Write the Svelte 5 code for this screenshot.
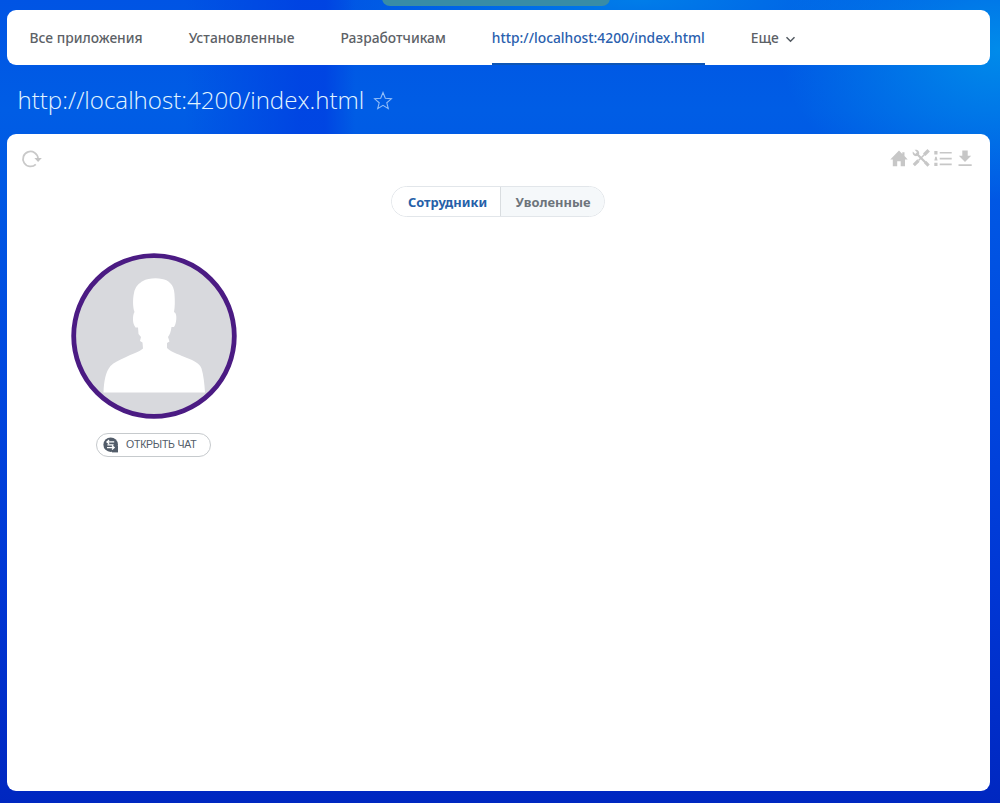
<script>
  const address = 'http://localhost:4200/index.html';
  const links = [
    { label: 'Все приложения' },
    { label: 'Установленные' },
    { label: 'Разработчикам' },
    { label: address, active: true }
  ];
</script>

<div class="page">
  <div class="notice"></div>
  <nav>
    {#each links as link}
      <span class="link" class:active={link.active}>{link.label}</span>
    {/each}
    <span class="link more">Еще
      <svg width="11" height="7" viewBox="0 0 11 7"><path d="M1.5 1.2 5.5 5.2 9.5 1.2" fill="none" stroke="#525960" stroke-width="1.5" /></svg>
    </span>
  </nav>

  <header>
    <h1>{address}</h1>
    <svg class="star" width="20" height="20" viewBox="0 0 20 20"><path d="M10 1.5 12.3 7.3 18.4 7.8 13.8 11.8 15.3 17.6 10 14.4 4.7 17.6 6.2 11.8 1.6 7.8 7.7 7.3Z" fill="none" stroke="#91bdf8" stroke-width="1.1" /></svg>
  </header>

  <main>
    <div class="toolbar">
      <svg width="22" height="20" viewBox="0 0 22 20"><path d="M14.8 15.3A7.5 7.5 0 1 1 17 9.2" fill="none" stroke="#c9c9c9" stroke-width="1.8" /><path d="M13.4 9H20.8L17.1 13Z" fill="#c4c4c4" /></svg>
      <div class="tools">
        <svg width="18" height="18" viewBox="0 0 18 18" fill="#c7c7c7"><path d="M9 1.5 0.3 10.4H2.8V17.2H7.2V12.2H10.7V17.2H15V10.4H17.7L14.5 7V3.2H12.3V4.9Z" /></svg>
        <svg width="18" height="18" viewBox="0 0 18 18"><g fill="none" stroke="#c7c7c7"><path d="m4.5 4.5 10 10" stroke-width="2.3" /><path d="m13.2 13.2 3.4 3.4M1.8 16.2l4.7-4.7" stroke-width="3.2" /><path d="m6.5 11.5 7-7" stroke-width="1.6" /><path d="m12.2 5.8 4.5-4.5" stroke-width="3.4" /></g><path d="M.8 2.6 3.2 5 5 3.2 2.6.8C5.5 0 7.8 2.3 7.1 5L5 7.1C2.3 7.8 0 5.5.8 2.6Z" fill="#c7c7c7" /></svg>
        <svg width="18" height="18" viewBox="0 0 18 18" fill="#c7c7c7"><path d="M5.7 3h12v1.6h-12zM5.7 8.8h12v1.6h-12zM5.7 14.6h12v1.6h-12zM.3 2h3.2v3.4H.3zM1.3 7.7h1.3l1 3.7H.3zM.3 13.7h3.2v3.4H.3z" /></svg>
        <svg width="18" height="18" viewBox="0 0 18 18" fill="#c7c7c7"><path d="M6.3 1.5h5.4v5.3h3.5L9 12.9 2.8 6.8h3.5zM2.5 15.2h13.2v1.7H2.5z" /></svg>
      </div>
    </div>

    <div class="tabs">
      <button class="selected">Сотрудники</button>
      <button>Уволенные</button>
    </div>

    <section class="employee">
      <svg width="166" height="166" viewBox="0 0 166 166">
        <circle cx="83" cy="83" r="80.5" fill="#d8d9dd" />
        <path d="M32.5 139.5 C33 128 34.5 119 39.5 113 C43 109 48 107.5 54 104.5 C61 101 68 99 72 95.5 L71.5 89.5 L69 88 L70 84 L67.5 81 L67 74.5 H64.5 C63 72 62 70 62 67 C62 63 62.3 61 63.5 59 C61.7 54 61.7 46 63 40 C64 34 68 30 72 28 C76 25.5 85 24.5 91 26 C97 27 103 31 103.5 41 C104 48 104 54 103 59 C105.2 60 105.5 63 105.3 66 C105 70 104 72.5 103 74 H100.5 C99.8 79 98.6 82 97 84 L98.5 88.5 L96 90 V95 C101 100 110 102 116 105 C123 107.5 129 111 130.5 115.5 C132.5 122 133.5 131 134 139.5Z" fill="#fff" />
        <circle cx="83" cy="83" r="80.3" fill="none" stroke="#4b1b83" stroke-width="4.8" />
      </svg>
      <button class="chat">
        <svg width="16" height="16" viewBox="0 0 16 16"><circle cx="7.7" cy="7.7" r="7.3" fill="#525c69" /><path d="M9 9h6v6.4H9z" fill="#525c69" /><path d="M6.1 3 3.9 4.9 6.1 6.8M4 4.9h7.2M4.4 7.8h6.2M4 10.6h7M9 8.7l2.2 1.9L9 12.5" fill="none" stroke="#fff" stroke-width="1.2" /></svg>
        <span>ОТКРЫТЬ ЧАТ</span>
      </button>
    </section>
  </main>
</div>

<style>
  :global(body) { margin: 0; }
  .page {
    box-sizing: border-box;
    position: relative;
    height: 803px;
    padding: 10px 10.5px 12px 6.5px;
    overflow: hidden;
    display: flex;
    flex-direction: column;
    font-family: "Open Sans", "Noto Sans", sans-serif;
    background:
      linear-gradient(90deg, #0044e200 185px, #0040e2cc 300px, #0040e2cc 325px, #0044e200 355px) 0 0 / 100% 134px no-repeat,
      radial-gradient(ellipse 220px 150px at 1000px 50px, #008bea 0%, #008bea00 100%),
      radial-gradient(ellipse 310px 65px at 640px 0, #007de9 0%, #007de900 100%),
      linear-gradient(180deg, #0054e4 0, #005de5 110px, #0058e4 190px, #0048df 370px, #0036d4 590px, #0027c0 803px);
  }
  .notice {
    position: absolute;
    top: -10px;
    left: 382px;
    width: 228px;
    height: 16px;
    border-radius: 8px;
    background: #388ca6;
  }
  nav {
    flex: none;
    box-sizing: border-box;
    height: 55px;
    padding: 0 23px;
    display: flex;
    gap: 46px;
    border-radius: 9px;
    background: #fff;
  }
  .link {
    position: relative;
    display: flex;
    align-items: center;
    height: 55px;
    color: #5c6166;
    font-family: "Noto Sans", "Open Sans", sans-serif;
    font-size: 13.8px;
    font-weight: 500;
    white-space: nowrap;
  }
  .active { color: #2a60ae; }
  .active::after {
    content: "";
    position: absolute;
    right: 0;
    bottom: 0;
    left: 0;
    height: 2px;
    background: #0e56b5;
  }
  .more { gap: 6px; }
  .more svg { margin-top: 4px; }
  header {
    flex: none;
    height: 69px;
    padding-left: 11px;
    display: flex;
    align-items: center;
    gap: 9px;
  }
  h1 {
    margin: 0;
    color: #e3f5ff;
    font-size: 24.1px;
    font-weight: 300;
    line-height: 34px;
  }
  .star { margin-top: 2px; }
  main {
    flex: 1;
    display: flex;
    flex-direction: column;
    border-radius: 9px;
    background: #fff;
  }
  .toolbar {
    height: 52px;
    box-sizing: border-box;
    padding: 15px 16px 0 14px;
    display: flex;
    justify-content: space-between;
  }
  .tools { display: flex; gap: 4px; }
  .tabs {
    align-self: center;
    box-sizing: border-box;
    width: 214px;
    height: 31px;
    display: flex;
    overflow: hidden;
    border: 1px solid #e2e6ea;
    border-radius: 16px;
  }
  button {
    margin: 0;
    padding: 0;
    border: 0;
    font-family: inherit;
  }
  .tabs button {
    flex: 1;
    padding-left: 1px;
    color: #6d747b;
    background: #f5f8fa;
    font-family: "Noto Sans", "Open Sans", sans-serif;
    font-size: 12.9px;
    font-weight: 700;
  }
  .tabs .selected {
    flex: 0 0 109px;
    box-sizing: border-box;
    padding-left: 3px;
    color: #2560a8;
    background: #fff;
    border-right: 1px solid #d9dde0;
  }
  .employee {
    align-self: flex-start;
    margin: 36px 0 0 64px;
    display: flex;
    flex-direction: column;
    align-items: center;
    gap: 13.5px;
  }
  .employee > svg { display: block; }
  .chat {
    box-sizing: border-box;
    width: 115px;
    height: 24px;
    padding-left: 6px;
    display: flex;
    align-items: center;
    gap: 7px;
    border: 1px solid #c6cacd;
    border-radius: 12px;
    color: #525c69;
    background: #fff;
    font-family: "Liberation Sans", sans-serif;
    font-size: 10.5px;
    letter-spacing: -0.22px;
    white-space: nowrap;
  }
  .chat span { padding-bottom: 2px; }
</style>
